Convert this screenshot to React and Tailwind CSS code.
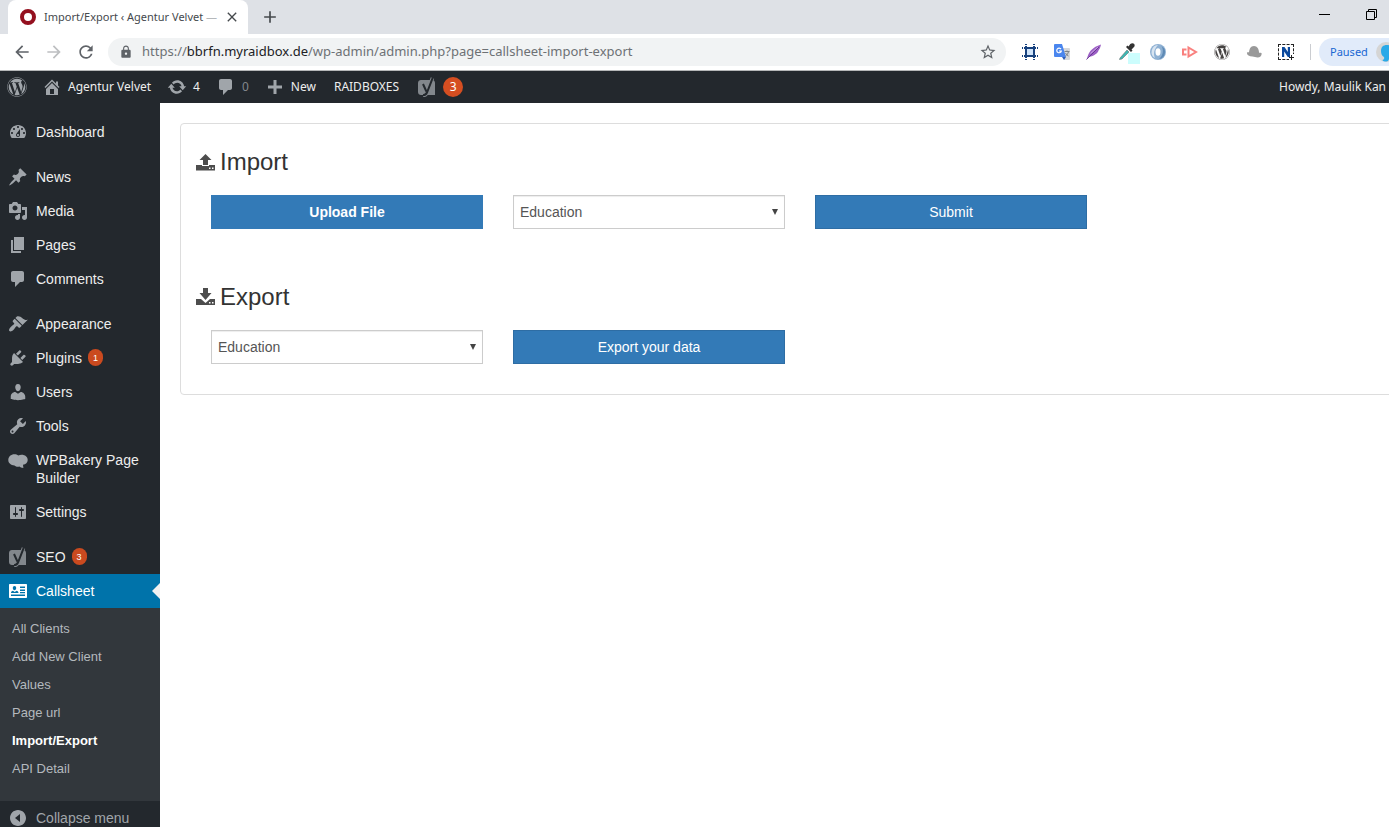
import React, { useState } from "react";
import { FaWordpress } from "react-icons/fa";
import {
  MdAdd,
  MdArrowBack,
  MdArrowForward,
  MdClose,
  MdLock,
  MdRefresh,
  MdStarBorder,
} from "react-icons/md";

/* ------------------ Icons ------------------ */

const PATHS = {
  dashboard:
    "M3.76 16h12.48c1.1-1.37 1.76-3.11 1.76-5 0-4.42-3.58-8-8-8s-8 3.58-8 8c0 1.89.66 3.63 1.76 5zM10 4c.55 0 1 .45 1 1s-.45 1-1 1-1-.45-1-1 .45-1 1-1zM6 6c.55 0 1 .45 1 1s-.45 1-1 1-1-.45-1-1 .45-1 1-1zm8 0c.55 0 1 .45 1 1s-.45 1-1 1-1-.45-1-1 .45-1 1-1zm-5.37 5.55L12 7v6c0 1.1-.9 2-2 2s-2-.9-2-2c0-.57.24-1.08.63-1.45zM4 10c.55 0 1 .45 1 1s-.45 1-1 1-1-.45-1-1 .45-1 1-1zm12 0c.55 0 1 .45 1 1s-.45 1-1 1-1-.45-1-1 .45-1 1-1zm-5 3c0-.55-.45-1-1-1s-1 .45-1 1 .45 1 1 1 1-.45 1-1z",
  pin: "M10.44 3.02l1.82-1.82 6.36 6.35-1.83 1.82c-1.05-.68-2.48-.57-3.41.36l-.75.75c-.92.93-1.04 2.35-.35 3.41l-1.83 1.82-2.41-2.41-2.8 2.79c-.42.42-3.38 2.71-3.8 2.29s1.86-3.39 2.28-3.81l2.79-2.79L4.1 9.36l1.83-1.82c1.05.69 2.48.57 3.4-.36l.75-.75c.93-.92 1.05-2.35.36-3.41z",
  media:
    "M13 11V4c0-.55-.45-1-1-1h-1.67L9 1H5L3.67 3H2c-.55 0-1 .45-1 1v7c0 .55.45 1 1 1h10c.55 0 1-.45 1-1zM7 4.5c1.38 0 2.5 1.12 2.5 2.5S8.38 9.5 7 9.5 4.5 8.38 4.5 7 5.62 4.5 7 4.5zM14 6h5v10.5c0 1.38-1.12 2.5-2.5 2.5S14 17.88 14 16.5s1.12-2.5 2.5-2.5c.17 0 .34.02.5.05V9h-3V6zm-4 8.05V13h2v3.5c0 1.38-1.12 2.5-2.5 2.5S7 17.88 7 16.5 8.12 14 9.5 14c.17 0 .34.02.5.05z",
  page: "M6 15V2h10v13H6zm-1 1h8v2H3V5h2v11z",
  comment:
    "M5 2h9c1.1 0 2 .9 2 2v7c0 1.1-.9 2-2 2h-2l-5 5v-5H5c-1.1 0-2-.9-2-2V4c0-1.1.9-2 2-2z",
  brush:
    "M14.48 11.06L7.41 3.99l1.5-1.5c.5-.56 2.3-.47 3.51.32 1.21.8 1.43 1.28 2.91 2.1 1.18.64 2.45 1.26 4.45.85zm-.71.71L6.7 4.7 4.93 6.47c-.39.39-.39 1.02 0 1.41l1.06 1.06c.39.39.39 1.03 0 1.42-.6.6-1.43 1.11-2.21 1.69-.35.26-.7.53-1.01.84C1.43 14.23.4 16.08 1.4 17.07c.99 1 2.84-.03 4.18-1.36.31-.31.58-.66.85-1.02.57-.78 1.08-1.61 1.69-2.21.39-.39 1.02-.39 1.41 0l1.06 1.06c.39.39 1.02.39 1.41 0z",
  plug: "M13.11 4.36L9.87 7.6 8 5.73l3.24-3.24c.35-.34 1.05-.2 1.56.32.52.51.66 1.21.31 1.55zm-8 1.77l.91-1.12 9.01 9.01-1.19.84c-.71.71-2.63 1.16-3.82 1.16H6.14L4.9 17.26c-.59.59-1.54.59-2.12 0-.59-.58-.59-1.53 0-2.12l1.24-1.24v-3.88c0-1.13.4-3.19 1.09-3.89zm7.26 3.97l3.24-3.24c.34-.35 1.04-.21 1.55.31.52.51.66 1.21.31 1.55l-3.24 3.25z",
  user: "M10 9.25c-2.27 0-2.73-3.44-2.73-3.44C7 4.02 7.82 2 9.97 2c2.16 0 2.98 2.02 2.71 3.81 0 0-.41 3.44-2.68 3.44zm0 2.57L12.72 10c2.39 0 4.52 2.33 4.52 4.53v2.49s-3.65 1.13-7.24 1.13c-3.65 0-7.24-1.13-7.24-1.13v-2.49c0-2.25 1.94-4.48 4.47-4.48z",
  wrench:
    "M16.68 9.77c-1.34 1.34-3.3 1.67-4.95.99l-5.41 6.52c-.99.99-2.59.99-3.58 0s-.99-2.59 0-3.57l6.52-5.42c-.68-1.65-.35-3.61.99-4.95 1.28-1.28 3.12-1.62 4.72-1.06l-2.89 2.89 2.82 2.82 2.86-2.87c.53 1.58.18 3.39-1.08 4.65zM3.81 16.21c.4.39 1.04.39 1.43 0 .4-.4.4-1.04 0-1.43-.39-.4-1.03-.4-1.43 0-.39.39-.39 1.03 0 1.43z",
  bakery:
    "M.3 10C.3 6.600 3 4.200 6.400 4.200c1.500 0 2.900.5 3.900 1.300 1-.5 2.100-.8 3.300-.8 3.500 0 6.100 2.200 6.100 5.200 0 2.600-1.900 4.300-4.700 4.800l.4 3.200c-1.900-.2-3.200-.6-4-1.500-1.100.5-2.300.5-3.300.1-.7-.3-1.200-.7-1.600-1.100C3 15.300.3 13.200.3 10z",
  sliders:
    "M18 16V4c0-.55-.45-1-1-1H3c-.55 0-1 .45-1 1v12c0 .55.45 1 1 1h14c.55 0 1-.45 1-1zM8 11h1c.55 0 1 .45 1 1s-.45 1-1 1H8v1.5c0 .28-.22.5-.5.5s-.5-.22-.5-.5V13H6c-.55 0-1-.45-1-1s.45-1 1-1h1V5.5c0-.28.22-.5.5-.5s.5.22.5.5V11zm5-2h-1c-.55 0-1-.45-1-1s.45-1 1-1h1V5.5c0-.28.22-.5.5-.5s.5.22.5.5V7h1c.55 0 1 .45 1 1s-.45 1-1 1h-1v5.5c0 .28-.22.5-.5.5s-.5-.22-.5-.5V9z",
  idCard:
    "M2 3h16c.6 0 1 .4 1 1v12c0 .6-.4 1-1 1H2c-.6 0-1-.4-1-1V4c0-.6.4-1 1-1zM6.5 5C5.4 5 4.8 5.9 4.8 7s.6 2.2 1.7 2.2S8.2 8.1 8.2 7 7.6 5 6.5 5zM12 5.5v1.5h5V5.5zM12 8.5V10h5V8.5zM5 9.7c-1.3.2-2 1-2 2.3h7.5c0-1.3-.8-2.1-2-2.3L6.7 11zM3 13.5V15h14v-1.5zM12 11v1.2h5V11z",
  home: "M16 8.5l1.53 1.53-1.06 1.06L10 4.6l-6.47 6.49-1.06-1.06L10 2.5l4 4v-2h2v4zm-6-2.46l6 5.99V18H4v-5.97zM12 17v-5H8v5h4z",
  update:
    "M10.2 3.28c3.53 0 6.43 2.61 6.92 6h2.08l-3.5 4-3.5-4h2.32c-.45-1.97-2.21-3.45-4.32-3.45-1.45 0-2.73.71-3.54 1.78L4.95 5.66C6.23 4.2 8.11 3.28 10.2 3.28zm-.4 13.44c-3.52 0-6.43-2.61-6.92-6H.8l3.5-4c1.17 1.33 2.33 2.67 3.5 4H5.48c.45 1.97 2.21 3.45 4.32 3.45 1.45 0 2.73-.71 3.54-1.78l1.71 1.95c-1.28 1.46-3.15 2.38-5.25 2.38z",
  plus: "M17 8.5v3h-5.5V17h-3v-5.5H3v-3h5.5V3h3v5.5z",
  collapse:
    "M10 2c4.42 0 8 3.58 8 8s-3.58 8-8 8-8-3.58-8-8 3.58-8 8-8zM12 14V6l-5 4z",
};

const Icon = ({ name, className = "size-5" }) => (
  <svg
    viewBox="0 0 20 20"
    fill="currentColor"
    fillRule="evenodd"
    aria-hidden="true"
    className={`shrink-0 ${className}`}
  >
    <path d={PATHS[name]} />
  </svg>
);

const YoastIcon = ({ className = "size-5" }) => (
  <svg viewBox="0 0 20 20" aria-hidden="true" className={`shrink-0 ${className}`}>
    <path
      d="M4 3h11c1.7 0 3 1.3 3 3v12H4c-1.7 0-3-1.3-3-3V6c0-1.7 1.3-3 3-3z"
      fill="#82878c"
    />
    <path
      d="M15.5 1L10 15.5c-.8 2-1.8 3-4 3"
      fill="none"
      stroke="#82878c"
      strokeWidth="3.6"
    />
    <path
      d="M6 7l3.4 7.5M15.7.8L10 15.5c-.8 1.8-1.8 2.7-4 2.7"
      fill="none"
      stroke="#23282d"
      strokeWidth="2"
    />
  </svg>
);

const UploadIcon = () => (
  <svg viewBox="0 0 19 19" aria-hidden="true" className="size-[19px] shrink-0">
    <path
      d="M9.5 1L15.5 7H12v5H7V7H3.5zM0 12h6v1h7v-1h6v5.5H0zM13 14.5V16h1.5v-1.5zM16 14.5V16h1.5v-1.5z"
      fill="#4d4d4d"
      fillRule="evenodd"
    />
  </svg>
);

const DownloadIcon = () => (
  <svg viewBox="0 0 19 19" aria-hidden="true" className="size-[19px] shrink-0">
    <path
      d="M7 0h5v5h3.5l-6 7-6-7H7zM0 11h5l4.5 4 4.5-4h5v6H0zM13 14v1.5h1.5V14zM16 14v1.5h1.5V14z"
      fill="#4d4d4d"
      fillRule="evenodd"
    />
  </svg>
);

/* ------------------ Browser chrome ------------------ */

const TabStrip = () => (
  <div className="flex h-[34px] shrink-0 items-stretch bg-[#dee1e6] pl-2">
    <div className="flex w-60 items-center rounded-t-lg bg-white pl-3 pr-2">
      <svg viewBox="0 0 16 16" aria-hidden="true" className="size-4 shrink-0">
        <circle cx="8" cy="8" r="6" fill="none" stroke="#94101f" strokeWidth="4" />
      </svg>
      <span className="ml-2 flex-1 whitespace-nowrap text-[11px] text-[#45494d]">
        Import/Export ‹ Agentur Velvet <span className="text-[#b5b8bb]">—</span>
      </span>
      <button aria-label="Close tab" className="text-[#45494d]">
        <MdClose className="size-4" />
      </button>
    </div>
    <button aria-label="New tab" className="ml-3 text-[#45494d]">
      <MdAdd className="size-5" />
    </button>
    <div className="ml-auto flex items-center gap-9 pb-1.5 pr-3">
      <button aria-label="Minimize">
        <svg viewBox="0 0 11 11" className="size-[11px]">
          <path d="M0 5.5h11" stroke="#000" />
        </svg>
      </button>
      <button aria-label="Restore">
        <svg viewBox="0 0 11 11" className="size-[11px]" fill="none" stroke="#000">
          <path d="M.5 2.5h8v8h-8zM2.5 2.5v-2h8v8h-2" />
        </svg>
      </button>
    </div>
  </div>
);

const Extensions = () => (
  <div className="flex shrink-0 items-center gap-4 pl-4">
    <svg viewBox="0 0 16 16" className="size-4">
      <path d="M4 4h8v8H4z" fill="#cfe4fb" />
      <path
        d="M4 0v16M12 0v16M0 4h16M0 12h16"
        stroke="#17427f"
        strokeWidth="2"
        strokeDasharray="1 1 12 1 1 0"
      />
    </svg>
    <svg viewBox="0 0 16 16" className="size-4">
      <path d="M7 4h8a1 1 0 0 1 1 1v10a1 1 0 0 1-1 1h-5z" fill="#d6d8db" />
      <path d="M1 0h7l4 13H1a1 1 0 0 1-1-1V1a1 1 0 0 1 1-1z" fill="#4a86ee" />
      <path d="M8 13h4l-2 3z" fill="#2f5fb8" />
      <path d="M7 5.2A2.3 2.3 0 1 0 7.3 7H5" fill="none" stroke="#fff" strokeWidth="1.2" />
      <path d="M10.5 7.5h5M13 6.5v1M14.5 7.5c-.5 2.3-1.5 3.5-3 4.5M11.5 9c.7 1.4 1.6 2.3 3 3" fill="none" stroke="#7b8288" />
    </svg>
    <svg viewBox="0 0 16 16" className="size-4">
      <path d="M15 .5C10 2 5 5 2.5 10L.5 15.5l2.5-2.5c5-1 9-4 9.5-6.5 1.2-1.5 2-3.5 2.5-6z" fill="#9b5fc4" />
      <path d="M.5 15.5L13 3" stroke="#5d2b8a" strokeWidth=".8" />
      <path d="M4.5 9.5L12 3" stroke="#d3b4e8" strokeWidth=".8" />
    </svg>
    <svg viewBox="0 0 20 20" className="-mr-1 size-5 overflow-visible">
      <path d="M10 11h12v11H10z" fill="#ccfdfd" />
      <path d="M2 16l7-8 2 2-7 7-2.5.5z" fill="#3bb8b4" stroke="#6b7070" strokeWidth=".6" />
      <path d="M8 5l5 5 1.5-1.5-1-1L16 5c1-1.2.8-2.5 0-3.3S13.3 1 12.3 2L10.5 4.5l-1-1z" fill="#333" />
    </svg>
    <svg viewBox="0 0 16 16" className="size-4">
      <circle cx="8" cy="8" r="8" fill="#8fb1d3" />
      <path d="M8 1a7 7 0 0 0-3 13c-2-4-1-9 3-13z" fill="#d7e4f1" />
      <path d="M9 15a7 7 0 0 0 2.5-13C14 6 13 12 9 15z" fill="#5f8ab5" />
      <ellipse cx="8" cy="8" rx="2.5" ry="3.7" fill="#fff" />
    </svg>
    <svg viewBox="0 0 16 16" className="size-4" fill="none" stroke="#f9807e" strokeWidth="2">
      <path d="M4.5 5.5H1v5h3.5" />
      <path d="M6.5 3.5L14 8l-7.5 4.500z" />
    </svg>
    <FaWordpress className="size-4 text-[#464342]" />
    <svg viewBox="0 0 16 16" className="size-4" fill="#999">
      <path d="M3 9.5C3 5 4.500 2 8 2c3.200 0 5 3 5 7z" />
      <path d="M1 8.5c2-.6 3.5.5 7 .5s5-.5 7.500 0c.6 2.300-1 4.500-4 4.500-2 0-3-1-5-1C3 12.500.5 11 1 8.500z" />
    </svg>
    <svg viewBox="0 0 16 16" className="size-4" fill="none">
      <path d="M0 .5h16M.5 0v16M0 15.5h11M15.5 0v10" stroke="#222" strokeDasharray="3 1.3" />
      <path d="M4 13V3h2.500l3.300 5V3H12v10H9.800L6.200 7.600V13z" fill="#0a489c" />
      <path d="M13.5 11v5M11 13.5h5" stroke="#222" />
    </svg>
  </div>
);

const AddressBar = () => (
  <div className="flex h-9 shrink-0 items-center bg-white pl-3">
    <button aria-label="Back" className="text-[#5f6368]">
      <MdArrowBack className="size-5" />
    </button>
    <button aria-label="Forward" className="ml-3 text-[#bdbfc1]">
      <MdArrowForward className="size-5" />
    </button>
    <button aria-label="Reload" className="ml-3 text-[#5f6368]">
      <MdRefresh className="size-5" />
    </button>
    <div className="ml-3 flex h-7 min-w-0 flex-1 items-center rounded-full bg-[#f1f3f4] pl-[11px] pr-[9px]">
      <MdLock className="size-3.5 shrink-0 text-[#5f6368]" />
      <a
        href="#url"
        className="ml-[9px] flex-1 whitespace-nowrap text-[13px] text-[#6d7175]"
      >
        https://<span className="text-[#202124]">bbrfn.myraidbox.de</span>
        /wp-admin/admin.php?page=callsheet-import-export
      </a>
      <button aria-label="Bookmark this page" className="text-[#5f6368]">
        <MdStarBorder className="size-[18px]" />
      </button>
    </div>
    <Extensions />
    <div className="ml-4 h-4 w-px shrink-0 bg-[#cbcdd1]" />
    <button className="ml-2 flex h-7 w-[70px] shrink-0 items-center gap-2 overflow-hidden rounded-l-full bg-[#e1ebfa] pl-[11px] text-[11px] text-[#1a67d2]">
      Paused
      <svg viewBox="0 0 20 20" aria-hidden="true" className="size-5 shrink-0">
        <circle cx="10" cy="10" r="10" fill="#d5d5d5" />
        <path d="M5 9c0-4 2-6 6-6s7 3 7 7-2 7-5 7c-.5 1.5-1 2.5-2.5 2.5-2 0-4-.5-4-1.5 1.5-.5 2-1.5 1.5-3-2-1-3-3-3-6z" fill="#29a9e8" />
      </svg>
    </button>
  </div>
);

/* ------------------ WordPress admin ------------------ */

const AdminBar = () => (
  <header className="flex h-8 shrink-0 items-center overflow-hidden whitespace-nowrap bg-[#23282d] text-[12px] text-[#eee]">
    <a href="#about" aria-label="About WordPress" className="ml-[7px] text-[#a0a5aa]">
      <FaWordpress className="size-5" />
    </a>
    <a href="#site" className="ml-[15px] flex items-center gap-1.5">
      <Icon name="home" className="size-5 text-[#a0a5aa]" />
      Agentur Velvet
    </a>
    <a href="#updates" className="ml-4 flex items-center gap-1.5">
      <Icon name="update" className="size-5 text-[#a0a5aa]" />4
    </a>
    <a href="#comments" className="ml-4 flex items-center gap-1.5 text-[#82878c]">
      <Icon name="comment" className="size-5 text-[#a0a5aa]" />0
    </a>
    <a href="#new" className="ml-4 flex items-center gap-1.5">
      <Icon name="plus" className="size-5 text-[#a0a5aa]" />
      New
    </a>
    <a href="#raidboxes" className="ml-[18px]">
      RAIDBOXES
    </a>
    <a href="#yoast" className="ml-[18px] flex items-center gap-1.5">
      <YoastIcon />
      <span className="flex size-5 items-center justify-center rounded-full bg-[#d54e21] text-white">
        3
      </span>
    </a>
    <a href="#profile" className="ml-auto w-[110px] shrink-0">
      Howdy, Maulik Kan
    </a>
  </header>
);

const menuGroups = [
  [{ label: "Dashboard", icon: "dashboard" }],
  [
    { label: "News", icon: "pin" },
    { label: "Media", icon: "media" },
    { label: "Pages", icon: "page" },
    { label: "Comments", icon: "comment" },
  ],
  [
    { label: "Appearance", icon: "brush" },
    { label: "Plugins", icon: "plug", count: 1 },
    { label: "Users", icon: "user" },
    { label: "Tools", icon: "wrench" },
    { label: "WPBakery Page Builder", icon: "bakery" },
    { label: "Settings", icon: "sliders" },
  ],
  [
    { label: "SEO", icon: "yoast", count: 3 },
    { label: "Callsheet", icon: "idCard", active: true },
  ],
];

const submenu = [
  "All Clients",
  "Add New Client",
  "Values",
  "Page url",
  "Import/Export",
  "API Detail",
];

const MenuItem = ({ label, icon, count, active }) => (
  <li className="relative">
    <a
      href={`#${label}`}
      className={`flex py-2 pl-2 pr-3 ${active ? "bg-[#0073aa] text-white" : "text-[#eee]"}`}
    >
      {icon === "yoast" ? (
        <YoastIcon className="-my-px size-5" />
      ) : (
        <Icon
          name={icon}
          className={
            active ? "-my-px size-5 text-white" : "-my-px size-5 text-[#a0a5aa]"
          }
        />
      )}
      <span className="ml-2">{label}</span>
      {count && (
        <span className="ml-1.5 flex h-[17px] w-[15px] items-center justify-center rounded-full bg-[#ca4a1f] text-[9px] text-white">
          {count}
        </span>
      )}
    </a>
    {active && (
      <span className="absolute right-0 top-[9px] border-y-8 border-r-8 border-y-transparent border-r-[#f1f1f1]" />
    )}
  </li>
);

const Sidebar = ({ current, onSelect }) => (
  <nav className="w-40 shrink-0 bg-[#23282d] pt-3 font-['Liberation_Sans',Arial,sans-serif] text-[14px] leading-[18px]">
    {menuGroups.map((group, i) => (
      <ul key={i} className={i > 0 ? "mt-[11px]" : ""}>
        {group.map((item) => (
          <MenuItem key={item.label} {...item} />
        ))}
      </ul>
    ))}
    <ul className="bg-[#32373c] pb-[18px] pt-[7px] text-[13px]">
      {submenu.map((label) => (
        <li key={label}>
          <a
            href={`#${label}`}
            onClick={() => onSelect(label)}
            className={`block px-3 py-[5px] ${
              current === label ? "font-bold text-white" : "text-[#b4b9be]"
            }`}
          >
            {label}
          </a>
        </li>
      ))}
    </ul>
    <button className="flex items-center gap-2 py-[7px] pl-2 text-[#a0a5aa]">
      <Icon name="collapse" />
      Collapse menu
    </button>
  </nav>
);

const CategorySelect = ({ label }) => (
  <div className="relative">
    <select
      aria-label={label}
      className="block h-[34px] w-full appearance-none border border-[#ccc] bg-white px-1.5 text-[14px] text-[#555] shadow-[inset_0_1px_1px_rgba(0,0,0,0.075)]"
    >
      <option>Education</option>
    </select>
    <svg
      viewBox="0 0 6 6"
      aria-hidden="true"
      className="pointer-events-none absolute right-[7px] top-[14px] size-1.5"
    >
      <path d="M0 0h6L3 6z" fill="#444" />
    </svg>
  </div>
);

const buttonClass =
  "h-[34px] w-full border border-[#2e6da4] bg-[#337ab7] text-[14px] text-white";

const ImportExport = () => (
  <main className="min-w-0 flex-1 overflow-hidden bg-white pl-5 pt-5 font-['Liberation_Sans',Arial,sans-serif]">
    {/* card runs past the right edge of the window */}
    <div className="-mr-[31px] rounded border border-[#ddd] px-[15px] pb-[30px] pt-[25px]">
      <section>
        <h3 className="flex items-center gap-[5px] text-[24px] leading-[26px] text-[#333]">
          <UploadIcon />
          Import
        </h3>
        <div className="mt-5 grid grid-cols-4 gap-[30px] px-[15px]">
          <button className="h-[34px] w-full bg-[#337ab7] text-[14px] font-bold text-white">
            Upload File
          </button>
          <CategorySelect label="Import category" />
          <button className={buttonClass}>Submit</button>
        </div>
      </section>
      <section className="mt-[55px]">
        <h3 className="flex items-center gap-[5px] text-[24px] leading-[26px] text-[#333]">
          <DownloadIcon />
          Export
        </h3>
        <div className="mt-5 grid grid-cols-4 gap-[30px] px-[15px]">
          <CategorySelect label="Export category" />
          <button className={buttonClass}>Export your data</button>
        </div>
      </section>
    </div>
  </main>
);

const App = () => {
  const [current, setCurrent] = useState("Import/Export");

  return (
    <div className="flex h-screen flex-col overflow-hidden bg-white font-['Noto_Sans','Open_Sans',sans-serif]">
      <TabStrip />
      <AddressBar />
      <div className="h-px shrink-0 bg-[#b5b7b8]" />
      <AdminBar />
      <div className="flex min-h-0 flex-1">
        <Sidebar current={current} onSelect={setCurrent} />
        <ImportExport />
      </div>
    </div>
  );
};

export default App;
